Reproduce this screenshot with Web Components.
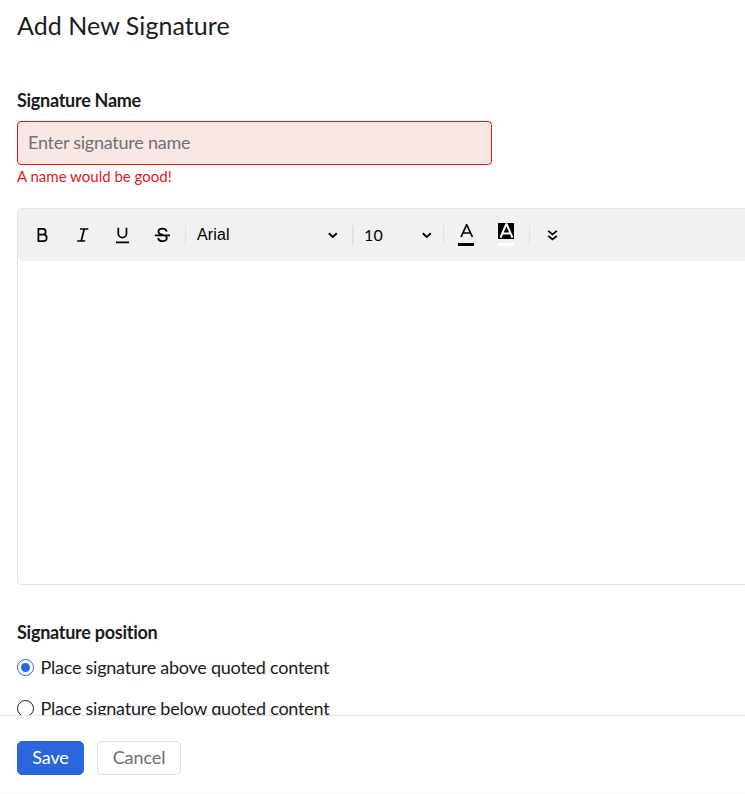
<!DOCTYPE html>
<html lang="en">
<head>
<meta charset="utf-8">
<title>Add New Signature</title>
<style>
  body {
    margin: 0;
    overflow: hidden;
    color: #191b1e;
    background: #fff;
    font-family: Lato, sans-serif;
    font-size: 18px;
  }
</style>
</head>
<body>
<signature-page>
  <text-field label="Signature Name" placeholder="Enter signature name" error="A name would be good!"></text-field>
  <rich-editor></rich-editor>
  <radio-group label="Signature position">
    <radio-option checked>Place signature above quoted content</radio-option>
    <radio-option>Place signature below quoted content</radio-option>
  </radio-group>
  <action-button slot="actions" primary>Save</action-button>
  <action-button slot="actions">Cancel</action-button>
</signature-page>

<script>
const icons = {
  bold: '<path d="M6.4 3.9v12.2M6.4 3.9h4.4a2.9 2.9 0 0 1 0 5.8H6.4h5.1a3.2 3.2 0 0 1 0 6.4H6.4z"/>',
  italic: '<path d="M8 4h8.3M5.2 16h8M12.2 4 9.2 16"/>',
  underline: '<path d="M6.3 2.8v5.7a4.1 4.1 0 0 0 8.2 0V2.8M4 17.3h13"/>',
  strike: '<path d="M14.7 6.7C14.3 4.7 12.7 3.7 10.5 3.7 8.2 3.7 6.4 4.8 6.4 6.7c0 1.5 1.2 2.3 4.1 3.1 3.1.8 4.3 1.7 4.3 3.3 0 2-1.8 3.1-4.3 3.1-2.6 0-4.1-1.2-4.4-3.2M2.8 10.3h15.2"/>',
  chevron: '<path d="m6.8 8.2 4 3.8 4-3.8" stroke-width="1.9"/>',
  more: '<path d="m6.2 5.9 4.3 3.6 4.3-3.6M6.2 10.9l4.3 3.6 4.3-3.6"/>',
  color: '<path d="M6 12 11.6-.2h.2L17.4 12M7.8 8h7.8"/><path d="M3 19.5h16" stroke-width="3"/>',
  highlight: '<path d="M3-2h16v16H3z" fill="#000" stroke="none"/><path d="M5.5 12.6 11.2-.8h.5L17.4 12.6M7.6 8.5h7.8" stroke="#fff" stroke-width="2"/><path d="M3 19.5h16" stroke="#fff" stroke-width="3"/>'
};

function define(name, html, setup) {
  const template = document.createElement('template');
  template.innerHTML = html;

  window.customElements.define(name, class extends HTMLElement {
    constructor() {
      super();
      this._shadowRoot = this.attachShadow({ mode: 'open' });
      this._shadowRoot.appendChild(template.content.cloneNode(true));
      if (setup) setup(this, this._shadowRoot);
    }
  });
}

define('signature-page', `
<style>
  :host {
    display: flex;
    flex-direction: column;
    height: 794px;
    box-sizing: border-box;
    border-bottom: 1px solid #f9f9fa;
  }

  main {
    height: 715px;
    flex: none;
    overflow: hidden;
    padding-left: 17px;
    box-sizing: border-box;
  }

  h1 {
    margin: 0 0 40px;
    padding-top: 10px;
    font-size: 25px;
    font-weight: 400;
    line-height: 30px;
    letter-spacing: 0.06px;
  }

  footer {
    display: flex;
    gap: 13px;
    flex: 1;
    align-items: flex-start;
    padding: 25px 17px 0;
    border-top: 1px solid #e2e3e5;
  }
</style>
<main>
  <h1>Add New Signature</h1>
  <slot></slot>
</main>
<footer><slot name="actions"></slot></footer>
`);

define('text-field', `
<style>
  :host {
    display: block;
    height: 128px;
  }

  label {
    display: block;
    height: 41px;
    line-height: 40px;
    font-weight: 700;
    font-size: 18px;
    letter-spacing: -0.28px;
  }

  input {
    display: block;
    width: 475px;
    height: 44px;
    padding: 0 10px 2px;
    box-sizing: border-box;
    border: 1px solid #df1b1b;
    border-radius: 4px;
    background: #fbe6e6;
    font: inherit;
    letter-spacing: -0.25px;
    outline: none;
  }

  input::placeholder {
    color: #6e7077;
    opacity: 1;
  }

  p {
    margin: 0;
    color: #df1b1b;
    font-size: 15px;
    line-height: 22px;
  }
</style>
<label for="field"></label>
<input id="field" type="text">
<p></p>
`, (host, root) => {
  root.querySelector('label').textContent = host.getAttribute('label');
  root.querySelector('input').placeholder = host.getAttribute('placeholder');
  root.querySelector('p').textContent = host.getAttribute('error');
});

define('tool-icon', `
<style>
  :host {
    display: block;
    width: 20px;
    height: 20px;
    flex: none;
    color: #000;
  }

  svg {
    display: block;
    overflow: visible;
  }
</style>
<svg width="20" height="20" viewBox="0 0 20 20" fill="none" stroke="currentColor" stroke-width="1.7"></svg>
`, (host, root) => {
  root.querySelector('svg').innerHTML = icons[host.getAttribute('name')];
});

define('rich-editor', `
<style>
  :host {
    display: block;
    height: 377px;
    box-sizing: border-box;
    border: 1px solid #e2e3e5;
    border-right: 0;
    border-radius: 5px 0 0 5px;
  }

  .toolbar {
    display: flex;
    align-items: center;
    height: 52px;
    padding-left: 14px;
    box-sizing: border-box;
    border-radius: 5px 0 0 5px;
    background: #f0f1f3;
  }

  .tools {
    display: flex;
    gap: 20px;
    width: 153px;
  }

  .divider {
    width: 1px;
    height: 20px;
    flex: none;
    background: #e0e1e3;
  }

  .divider.wide {
    width: 2px;
  }

  .select {
    display: flex;
    align-items: center;
    justify-content: space-between;
    box-sizing: border-box;
    color: #000;
    font-size: 16px;
  }

  .font {
    width: 166px;
    padding: 0 10px 0 11px;
    font-family: "Liberation Sans", sans-serif;
    letter-spacing: 0.15px;
  }

  .size {
    width: 89px;
    padding: 0 7px 0 10px;
    font-size: 16px;
    letter-spacing: 0.3px;
  }

  .size span {
    padding-bottom: 2px;
  }

  .colors {
    display: flex;
    gap: 20px;
    width: 85px;
    padding-left: 11px;
    box-sizing: border-box;
  }

  .more {
    margin-left: 12px;
  }
</style>
<div class="toolbar">
  <div class="tools">
    <tool-icon name="bold"></tool-icon>
    <tool-icon name="italic"></tool-icon>
    <tool-icon name="underline"></tool-icon>
    <tool-icon name="strike"></tool-icon>
  </div>
  <span class="divider"></span>
  <div class="select font"><span>Arial</span><tool-icon name="chevron"></tool-icon></div>
  <span class="divider wide"></span>
  <div class="select size"><span>10</span><tool-icon name="chevron"></tool-icon></div>
  <span class="divider"></span>
  <div class="colors">
    <tool-icon name="color"></tool-icon>
    <tool-icon name="highlight"></tool-icon>
  </div>
  <span class="divider"></span>
  <tool-icon class="more" name="more"></tool-icon>
</div>
`);

define('radio-group', `
<style>
  :host {
    display: block;
    padding-top: 34px;
  }

  h2 {
    margin: 0 0 10px;
    font-size: 18px;
    font-weight: 700;
    line-height: 26px;
    letter-spacing: -0.26px;
  }
</style>
<h2></h2>
<slot></slot>
`, (host, root) => {
  root.querySelector('h2').textContent = host.getAttribute('label');
});

define('radio-option', `
<style>
  :host {
    display: flex;
    align-items: center;
    gap: 6.5px;
    height: 24px;
    margin-bottom: 17px;
    line-height: 24px;
    letter-spacing: -0.24px;
    white-space: nowrap;
  }

  i {
    display: grid;
    place-items: center;
    width: 17px;
    height: 17px;
    box-sizing: border-box;
    border: 1.5px solid #191b1e;
    border-radius: 50%;
  }

  :host([checked]) i {
    border-color: #2b66dd;
  }

  :host([checked]) i::after {
    content: "";
    width: 9px;
    height: 9px;
    border-radius: 50%;
    background: #2b66dd;
  }
</style>
<i></i><span><slot></slot></span>
`);

define('action-button', `
<style>
  :host {
    display: block;
  }

  button {
    display: block;
    width: 84px;
    height: 34px;
    padding: 0 0 2px;
    border: 1px solid #dfe0e2;
    border-radius: 5px;
    color: #6b6d72;
    background: #fff;
    font: inherit;
    letter-spacing: -0.1px;
  }

  :host([primary]) button {
    width: 67px;
    border-color: #2b66dd;
    color: #fff;
    background: #2b66dd;
  }
</style>
<button type="button"><slot></slot></button>
`);
</script>
</body>
</html>
